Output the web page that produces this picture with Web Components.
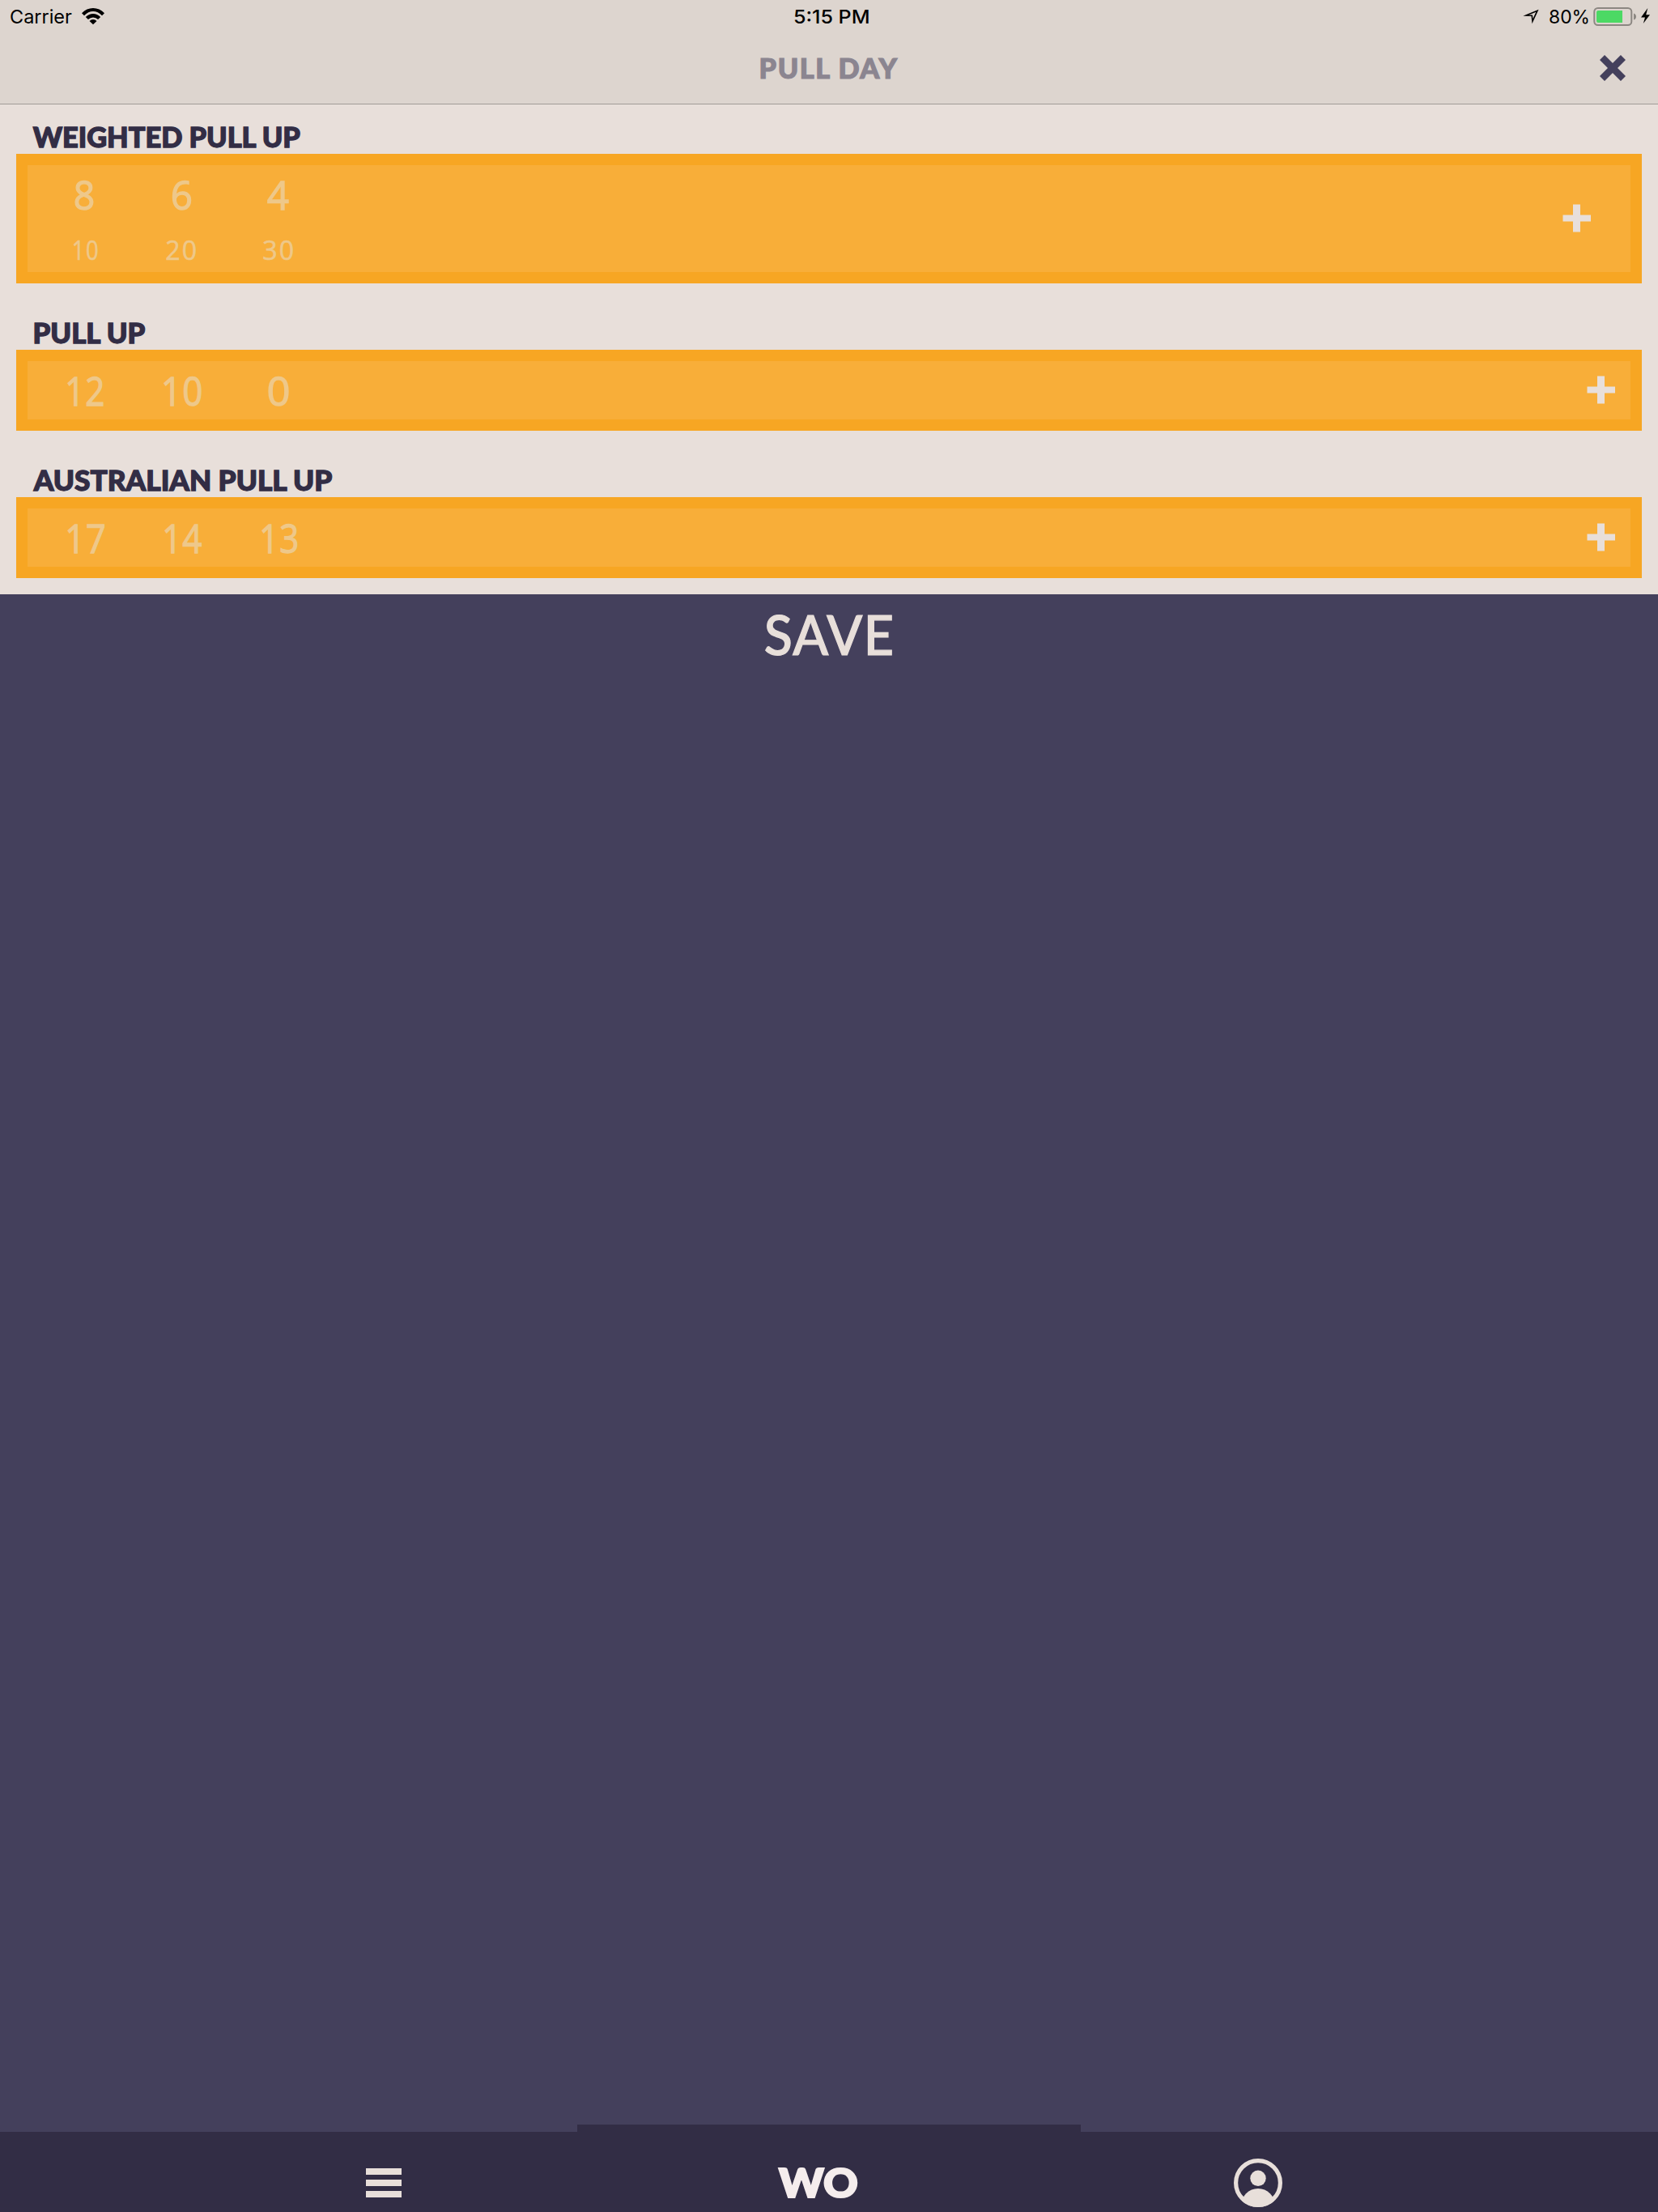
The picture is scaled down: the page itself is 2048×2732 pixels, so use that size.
<!DOCTYPE html>
<html lang="en">
<head>
<meta charset="utf-8">
<title>Pull Day</title>
<style>
  html, body { margin: 0; padding: 0; }
  body { width: 2048px; height: 2732px; overflow: hidden; background: #44405c; }
</style>
</head>
<body>
<workout-app></workout-app>
<script>
const measureCtx = document.createElement('canvas').getContext('2d');

// Text whose box is exactly its ink: w wide, and as tall as its capitals.
class FitText extends HTMLElement {
  connectedCallback() {
    const a = (n, d) => this.getAttribute(n) || d;
    const w = +a('w'), h = +a('h'), size = +a('size'), ls = +a('ls', 0), stroke = +a('stroke', 0);
    const font = `${a('weight', 400)} ${size}px ${a('font', 'Lato')}, "Liberation Sans", sans-serif`;
    const root = this.attachShadow({ mode: 'open' });
    root.innerHTML = `<style>
      :host { display: block; flex: none; width: ${w}px; height: ${h}px; }
      span { display: inline-block; white-space: nowrap; transform-origin: 0 0; letter-spacing: ${ls}px; font-kerning: normal; -webkit-text-stroke: ${stroke}px currentColor; }
    </style><span></span>`;
    const span = root.querySelector('span');
    span.textContent = a('text', '');
    span.style.font = font;
    span.style.lineHeight = h + 'px';
    this.style.font = font;
    this.style.lineHeight = h + 'px';
    measureCtx.font = font;
    measureCtx.letterSpacing = ls + 'px';
    const m = measureCtx.measureText(span.textContent);
    const k = (w - stroke) / (m.actualBoundingBoxRight + m.actualBoundingBoxLeft);
    const A = m.fontBoundingBoxAscent, D = m.fontBoundingBoxDescent;
    const dy = h - ((h - A - D) / 2 + A) + +a('dy', 0);
    span.style.transform = `translate(${m.actualBoundingBoxLeft * k + stroke / 2}px, ${dy}px) scaleX(${k})`;
  }
}
customElements.define('fit-text', FitText);

class StatusBar extends HTMLElement {
  constructor() {
    super();
    this.attachShadow({ mode: 'open' }).innerHTML = `<style>
      :host { display: grid; grid-template-columns: 1fr 92px 1fr; height: 41px; color: #000; }
      .l, .r { display: flex; align-items: flex-start; }
      .l { padding-left: 13px; }
      .r { justify-content: flex-end; padding-right: 9px; }
      svg { display: block; flex: none; }
      fit-text { margin-top: 12px; }
      .time { position: relative; left: 2.7px; }
    </style>
    <div class="l"><fit-text text="Carrier" font="Inter" size="23.5" w="76" h="17"></fit-text>
      <svg style="margin:9px 0 0 12px" width="28" height="22" viewBox="0 0 28 22">
        <path d="M0 7.2Q6 .9 14 .9t14 6.3L25 10.2Q20 5 14 5T3 10.2Z"/>
        <path d="M4.8 12Q9 8 14 8t9.2 4l-3.1 3Q17.5 12.4 14 12.4T7.9 15Z"/>
        <path d="M9.5 17Q11.5 15 14 15t4.5 2L14 21.2Z"/></svg></div>
    <fit-text class="time" text="5:15 PM" font="Inter" weight="500" size="23.5" w="92" h="17"></fit-text>
    <div class="r">
      <svg style="margin:10px 13px 0 0" width="20" height="21" viewBox="0 0 20 21"><path d="M4 9 18 3.2 12 16.2 11.3 9.3Z" fill="none" stroke="#000" stroke-width="1.6" stroke-miterlimit="10"/></svg>
      <fit-text text="80%" font="Inter" size="23.5" w="48" h="17"></fit-text>
      <svg style="margin:9px 0 0 6px" width="71" height="23" viewBox="0 0 71 23">
        <rect x="1.3" y="1" width="46" height="21" rx="4.5" fill="none" stroke="#8c8782" stroke-width="2"/>
        <path d="M6 4h30v15H6q-2 0-2-2V6q0-2 2-2Z" fill="#4cd964"/>
        <path d="M50 7.5q3 1 3 4t-3 4Z" fill="#8c8782"/>
        <path d="M67.3 1 59 12.6h5L61.8 20 70 9.2h-4.8Z"/></svg>
    </div>`;
  }
}
customElements.define('status-bar', StatusBar);

class NavHeader extends HTMLElement {
  constructor() {
    super();
    this.attachShadow({ mode: 'open' }).innerHTML = `<style>
      :host { display: block; height: 129px; box-sizing: border-box; background: #ddd5cf; border-bottom: 1px solid #a19b97; }
      .bar { display: grid; grid-template-columns: 1fr 171px 1fr; padding-right: 40px; }
      fit-text { margin-top: 31px; color: #8b8590; grid-column: 2; position: relative; left: 20.7px; }
      svg { justify-self: end; margin-top: 27px; }
    </style>
    <status-bar></status-bar>
    <div class="bar"><fit-text text="PULL DAY" weight="900" size="33.5" ls="1.6" stroke="1.2" dy="0.7" w="171.5" h="24"></fit-text>
      <svg width="32" height="32" viewBox="0 0 32 32"><path d="M3 3 29 29M29 3 3 29" stroke="#44405c" stroke-width="8.6"/></svg></div>`;
  }
}
customElements.define('nav-header', NavHeader);

class ExerciseSet extends HTMLElement {
  connectedCallback() {
    this.attachShadow({ mode: 'open' }).innerHTML = `<style>
      :host { display: block; width: 120px; color: #eec88a; }
      .small { margin-top: 39px; }
    </style>`;
    // Each value is "text,left inset,width".
    ['reps', 'load'].forEach((n, i) => {
      if (!this.hasAttribute(n)) return;
      const [t, x, w] = this.getAttribute(n).split(',');
      const d = document.createElement('div');
      d.className = i ? 'small' : 'big';
      d.style.paddingLeft = x + 'px';
      d.innerHTML = `<fit-text text="${t}" font="'Open Sans'" weight="500" size="${i ? 33 : 50}" ls="${i ? 2 : 1}" stroke="${i ? 0.6 : 1.3}" dy="${i ? 0 : 0.8}" w="${w}" h="${i ? 24 : 36}"></fit-text>`;
      this.shadowRoot.append(d);
    });
  }
}
customElements.define('exercise-set', ExerciseSet);

class ExerciseCard extends HTMLElement {
  connectedCallback() {
    const g = n => this.getAttribute(n);
    this.attachShadow({ mode: 'open' }).innerHTML = `<style>
      :host { display: block; }
      .title { margin: 0 0 9px ${g('inset')}px; color: #322d45; }
      .box { box-sizing: border-box; height: ${g('height')}px; border: 14px solid #f7a623; background: #f8ae39; display: flex; justify-content: space-between; }
      .sets { display: flex; padding: 18px 0 0 10px; }
      svg { margin: ${g('plus-top')}px ${g('plus-right')}px 0 0; }
    </style>
    <fit-text class="title" text="${g('name')}" weight="900" size="33.5" stroke="1.3" dy="0.8" w="${g('name-width')}" h="24"></fit-text>
    <div class="box"><div class="sets"><slot></slot></div>
      <svg width="35" height="35" viewBox="0 0 35 35"><path d="M13 .5h9v13h13v8H22v13h-9v-13H.5v-8H13Z" fill="#e8dfda"/></svg></div>`;
  }
}
customElements.define('exercise-card', ExerciseCard);

class TabBar extends HTMLElement {
  constructor() {
    super();
    this.attachShadow({ mode: 'open' }).innerHTML = `<style>
      :host { display: flex; flex-direction: column; flex: none; height: 108px; }
      .tip { width: 622px; height: 9px; margin-left: 713px; background: #322d45; }
      .bar { flex: 1; background: #322d45; display: flex; align-items: flex-start; padding-left: 452px; }
      .menu { display: grid; gap: 6px; margin-top: 45px; }
      .menu i { width: 44px; height: 8px; background: #e8dfda; }
      fit-text { color: #f5eded; margin: 45px 0 0 465px; }
      svg { margin: 33px 0 0 464.5px; }
    </style>
    <div class="tip"></div>
    <div class="bar"><div class="menu"><i></i><i></i><i></i></div>
      <fit-text text="WO" weight="900" size="48.5" stroke="2.2" dy="-0.3" w="98.5" h="36"></fit-text>
      <svg width="60" height="60" viewBox="0 0 60 60"><clipPath id="c"><circle cx="30" cy="30" r="30"/></clipPath>
        <circle cx="30" cy="30" r="27.4" fill="none" stroke="#e8dfda" stroke-width="5.2"/>
        <g fill="#e8dfda"><circle cx="30" cy="24.3" r="9.7"/><circle cx="30" cy="58" r="21" clip-path="url(#c)"/></g></svg></div>`;
  }
}
customElements.define('tab-bar', TabBar);

class WorkoutApp extends HTMLElement {
  constructor() {
    super();
    this.attachShadow({ mode: 'open' }).innerHTML = `<style>
      :host { display: flex; flex-direction: column; width: 2048px; height: 2732px; background: #44405c; }
      .list { box-sizing: border-box; height: 605px; flex: none; background: #e8dfda; padding: 28px 20px 0; display: flex; flex-direction: column; gap: 49px; }
      .save { flex: 1; padding: 26px 0 0 944.7px; color: #e8dfda; }
    </style>
    <nav-header></nav-header>
    <div class="list">
      <exercise-card name="WEIGHTED PULL UP" inset="20.3" name-width="332.5" height="160" plus-top="47.5" plus-right="49">
        <exercise-set reps="8,48,23.5" load="10,46,31.3"></exercise-set>
        <exercise-set reps="6,47.5,25" load="20,41,37.5"></exercise-set>
        <exercise-set reps="4,46,27" load="30,41,37.5"></exercise-set>
      </exercise-card>
      <exercise-card name="PULL UP" inset="21.5" name-width="139" height="100" plus-top="17.5" plus-right="19">
        <exercise-set reps="12,39,45"></exercise-set>
        <exercise-set reps="10,38,47.7"></exercise-set>
        <exercise-set reps="0,46.5,26.7"></exercise-set>
      </exercise-card>
      <exercise-card name="AUSTRALIAN PULL UP" inset="19.7" name-width="372" height="100" plus-top="17.5" plus-right="19">
        <exercise-set reps="17,39,47"></exercise-set>
        <exercise-set reps="14,39,46.7"></exercise-set>
        <exercise-set reps="13,39,44.7"></exercise-set>
      </exercise-card>
    </div>
    <div class="save"><fit-text text="SAVE" weight="500" size="67" ls="1.5" stroke="1.2" dy="0.7" w="157" h="48"></fit-text></div>
    <tab-bar></tab-bar>`;
  }
}
customElements.define('workout-app', WorkoutApp);
</script>
</body>
</html>
